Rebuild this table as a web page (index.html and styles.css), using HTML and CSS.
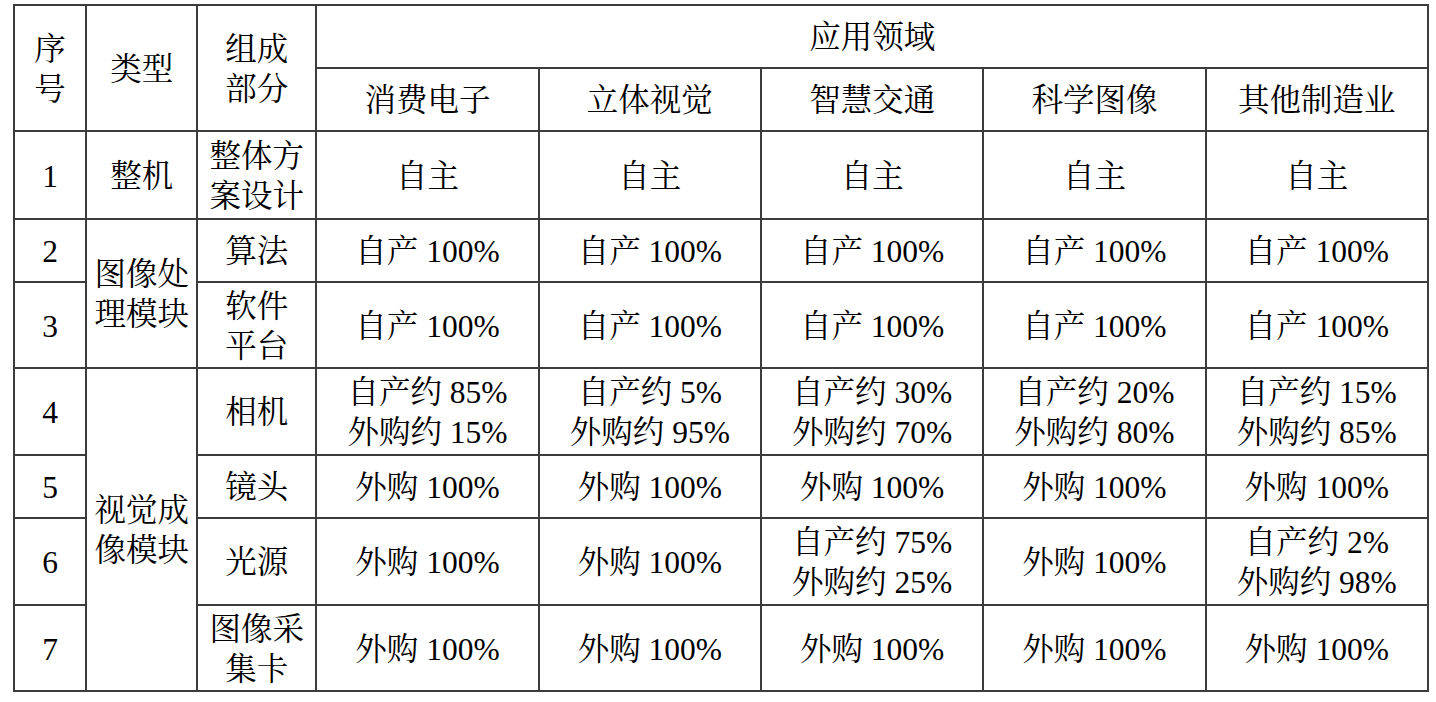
FILE: index.html
```html
<!DOCTYPE html>
<html lang="zh-CN">
<head>
<meta charset="utf-8">
<title>应用领域</title>
<link rel="stylesheet" href="styles.css">
</head>
<body>
<div class="page">
<table class="grid">
  <colgroup>
    <col class="c-no"><col class="c-type"><col class="c-part">
    <col class="c-app"><col class="c-app"><col class="c-app"><col class="c-app"><col class="c-app-last">
  </colgroup>
  <tr class="r-h1">
    <td rowspan="2">序<br>号</td>
    <td rowspan="2">类型</td>
    <td rowspan="2">组成<br>部分</td>
    <td colspan="5">应用领域</td>
  </tr>
  <tr class="r-h2">
    <td>消费电子</td><td>立体视觉</td><td>智慧交通</td><td>科学图像</td><td>其他制造业</td>
  </tr>
  <tr class="r-1">
    <td>1</td><td>整机</td><td>整体方<br>案设计</td>
    <td>自主</td><td>自主</td><td>自主</td><td>自主</td><td>自主</td>
  </tr>
  <tr class="r-2">
    <td>2</td><td rowspan="2">图像处<br>理模块</td><td>算法</td>
    <td>自产 100%</td><td>自产 100%</td><td>自产 100%</td><td>自产 100%</td><td>自产 100%</td>
  </tr>
  <tr class="r-3">
    <td>3</td><td>软件<br>平台</td>
    <td>自产 100%</td><td>自产 100%</td><td>自产 100%</td><td>自产 100%</td><td>自产 100%</td>
  </tr>
  <tr class="r-4">
    <td>4</td><td rowspan="4">视觉成<br>像模块</td><td>相机</td>
    <td>自产约 85%<br>外购约 15%</td><td>自产约 5%<br>外购约 95%</td><td>自产约 30%<br>外购约 70%</td><td>自产约 20%<br>外购约 80%</td><td>自产约 15%<br>外购约 85%</td>
  </tr>
  <tr class="r-5">
    <td>5</td><td>镜头</td>
    <td>外购 100%</td><td>外购 100%</td><td>外购 100%</td><td>外购 100%</td><td>外购 100%</td>
  </tr>
  <tr class="r-6">
    <td>6</td><td>光源</td>
    <td>外购 100%</td><td>外购 100%</td><td>自产约 75%<br>外购约 25%</td><td>外购 100%</td><td>自产约 2%<br>外购约 98%</td>
  </tr>
  <tr class="r-7">
    <td>7</td><td>图像采<br>集卡</td>
    <td>外购 100%</td><td>外购 100%</td><td>外购 100%</td><td>外购 100%</td><td>外购 100%</td>
  </tr>
</table>
</div>
</body>
</html>
```
FILE: styles.css
```css
html, body {
  margin: 0;
  padding: 0;
  background: #ffffff;
}
.page {
  padding: 4px 0 0 13px;
}
.grid {
  border-collapse: collapse;
  table-layout: fixed;
  width: 1416px;
  font-family: "Liberation Serif", "Noto Serif CJK SC", "Noto Sans CJK SC", serif;
  font-size: 31.5px;
  line-height: 40px;
  color: #000;
}
.grid td {
  border: 2px solid #3c3c3c;
  padding: 3px 0 0;
  text-align: center;
  vertical-align: middle;
  white-space: nowrap;
}
.c-no { width: 72px; }
.c-type { width: 111px; }
.c-part { width: 119px; }
.c-app { width: 222px; }
.c-app-last { width: 222px; }
.r-h1 { height: 63px; }
.r-h2 { height: 63px; }
.r-1 { height: 88px; }
.r-2 { height: 63px; }
.r-3 { height: 86px; }
.r-4 { height: 87px; }
.r-5 { height: 63px; }
.r-6 { height: 87px; }
.r-7 { height: 86px; }
```
